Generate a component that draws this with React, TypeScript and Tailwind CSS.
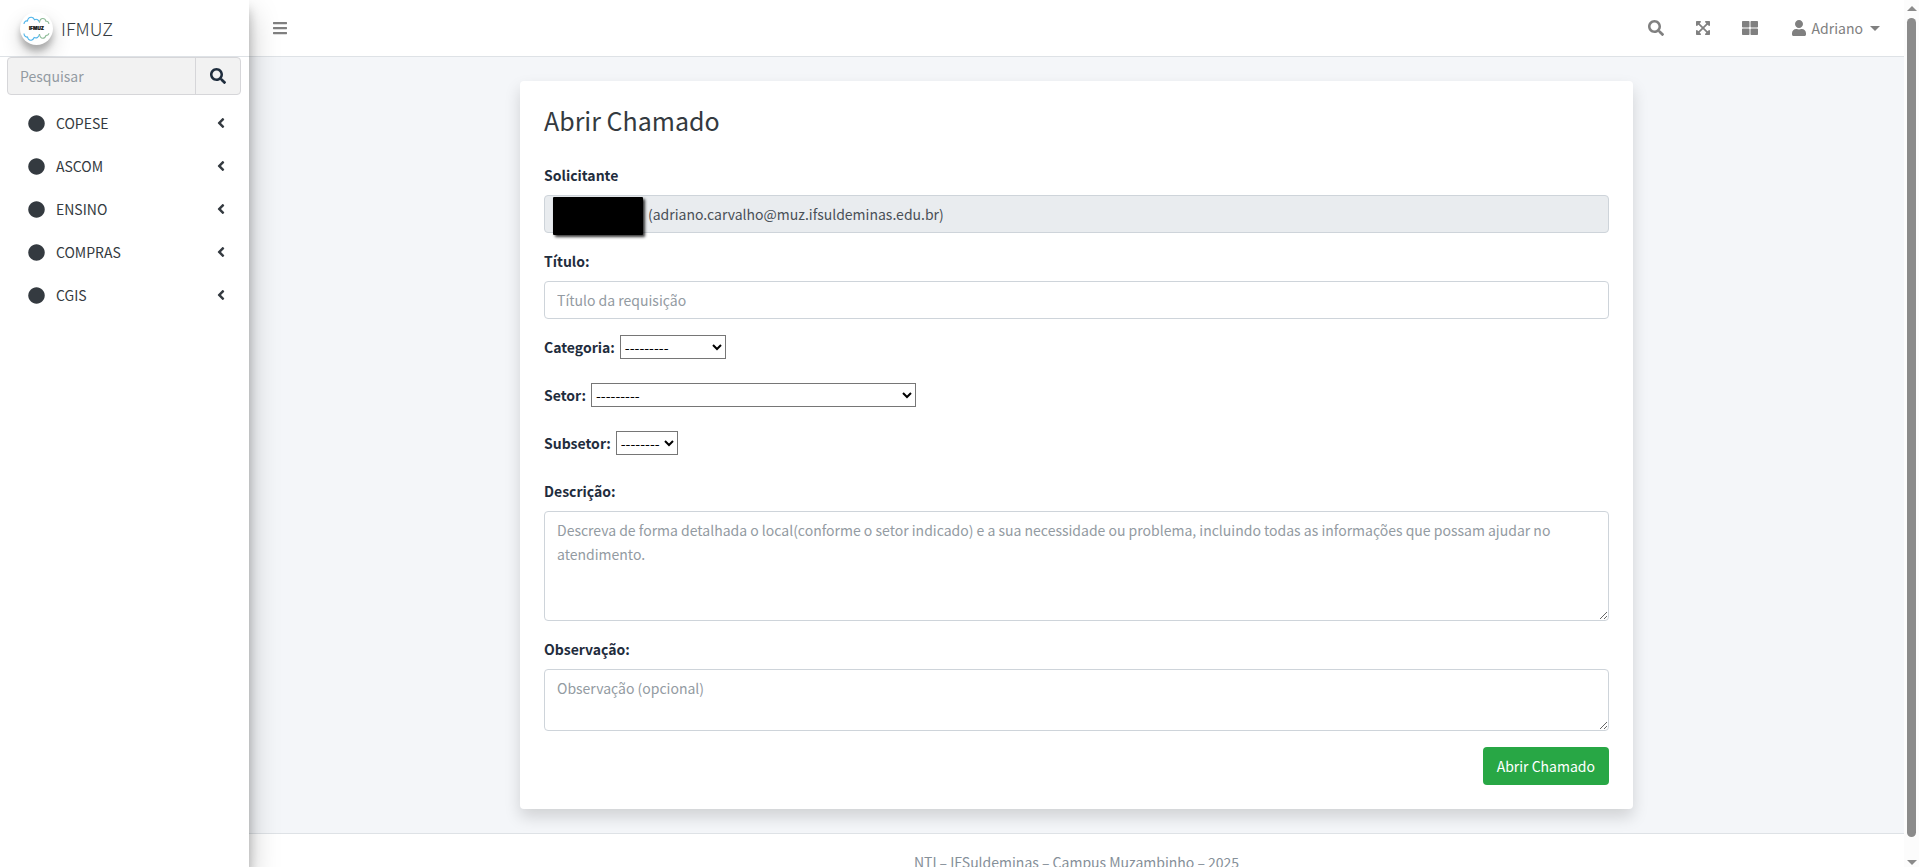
import React from "react";
import {
  FaAngleLeft,
  FaBars,
  FaCircle,
  FaExpandArrowsAlt,
  FaSearch,
  FaThLarge,
  FaUser,
} from "react-icons/fa";

const sections = ["COPESE", "ASCOM", "ENSINO", "COMPRAS", "CGIS"];

const field =
  "block w-full rounded border border-[#ced4da] bg-white px-3 py-1.5 text-[#495057] placeholder:text-[#939ba2] outline-none";
const label = "font-bold text-[#1f2d3d]";

function Logo() {
  return (
    <span className="flex size-[33px] items-center justify-center rounded-full bg-white shadow-[0_10px_20px_rgba(0,0,0,0.19),0_6px_6px_rgba(0,0,0,0.23)]">
      <svg viewBox="0 0 33 33" className="size-[33px]" fill="none" strokeWidth="1.1" aria-hidden="true">
        <path
          stroke="#4db4ea"
          d="M4 12c0-2 1.500-3.500 3.500-3 .2-2.500 1.800-4 4-3.800 1.700.2 2.500 1.300 3 2.500 2.200-1.200 4.500.2 5 2.800M4 21.500c0 2 1.500 4 3.500 3.500.5 2.500 2 3.500 3.800 3.200 1.700-.3 2.400-1.400 2.900-2.700 2.200 1 4.800 0 5.300-3.500"
        />
        <path
          stroke="#8dbb97"
          d="M19.500 10.500c.3-2.500 1.500-4 3.300-4 1.700 0 2.700 1 3.200 2.800 1.800-.3 2.700.9 2.900 2.700M19.500 22c.3 2.600 1.500 4.200 3.300 4.200 1.700 0 2.700-1.100 3.200-2.700 1.700-.2 2.700-.8 2.900-2.300"
        />
        <text
          x="16.500"
          y="18"
          textAnchor="middle"
          fontFamily="Inter, sans-serif"
          fontSize="4.600"
          fontWeight="900"
          stroke="#111"
          strokeWidth="0.2"
          fill="#111"
        >
          IFMUZ
        </text>
      </svg>
    </span>
  );
}

function Sidebar() {
  return (
    <aside className="z-20 flex w-[249px] shrink-0 flex-col bg-white shadow-[0_14px_28px_rgba(0,0,0,0.25),0_10px_10px_rgba(0,0,0,0.22)]">
      <a href="#" className="flex h-[57px] shrink-0 items-center gap-2 border-b border-[#dee2e6] pl-5 text-[#343a40]">
        <Logo />
        <span className="font-['Noto_Sans_CJK_SC_Light','Noto_Sans_CJK_JP_Light','Noto_Sans_CJK_SC',sans-serif] text-lg leading-6 font-light">
          IFMUZ
        </span>
      </a>
      <form className="mr-2 ml-[7px] flex h-[38px] shrink-0 overflow-hidden rounded border border-[#d6d6d9] bg-[#f2f2f2]" onSubmit={(e) => e.preventDefault()}>
        <input
          type="search"
          aria-label="Pesquisar"
          placeholder="Pesquisar"
          className="min-w-0 flex-1 px-3 outline-none placeholder:text-[#939ba2]"
        />
        <button type="submit" aria-label="Buscar" className="flex w-[45px] items-center justify-center border-l border-[#d6d6d9] text-base text-[#1f2d3d]">
          <FaSearch />
        </button>
      </form>
      <nav className="mt-2 flex flex-col gap-[3px] px-2">
        {sections.map((name) => (
          <a key={name} href="#" className="flex h-10 items-center gap-[11px] pr-3 pl-5 text-[#343a40]">
            <FaCircle className="size-[17px]" />
            <span className="flex-1">{name}</span>
            <FaAngleLeft className="size-4" />
          </a>
        ))}
      </nav>
    </aside>
  );
}

function Header() {
  return (
    <header className="flex h-[57px] shrink-0 items-center border-b border-[#dee2e6] bg-white pr-6 pl-[23px] text-[#808080]">
      <button type="button" aria-label="Menu" className="text-base">
        <FaBars />
      </button>
      <div className="ml-auto flex items-center gap-[31px] text-base">
        <button type="button" aria-label="Pesquisar">
          <FaSearch />
        </button>
        <button type="button" aria-label="Tela cheia">
          <FaExpandArrowsAlt />
        </button>
        <button type="button" aria-label="Painéis">
          <FaThLarge />
        </button>
        <button type="button" className="flex items-center">
          <FaUser className="mr-[5px] ml-0.5" />
          <span className="text-sm leading-6">Adriano</span>
          <span className="ml-[7px] border-x-[5px] border-t-[5px] border-x-transparent border-t-[#808080]" />
        </button>
      </div>
    </header>
  );
}

function SelectRow({ id, text, width, dashes }: { id: string; text: string; width: string; dashes: string }) {
  return (
    <div className="mb-6 flex h-6 items-center gap-[5px]">
      <label htmlFor={id} className={label}>
        {text}
      </label>
      <select id={id} className={`h-6 border border-[#767676] bg-white text-black ${width}`}>
        <option>{dashes}</option>
      </select>
    </div>
  );
}

function TicketForm() {
  return (
    <form className="mx-auto w-full max-w-[1113px] rounded bg-white p-6 shadow-[0_8px_16px_rgba(0,0,0,0.15)]" onSubmit={(e) => e.preventDefault()}>
      <h1 className="mb-7 text-[25px] leading-[30px] text-[#343a40]">Abrir Chamado</h1>

      <div className="mb-4">
        <label htmlFor="solicitante" className={`mb-2 block ${label}`}>
          Solicitante
        </label>
        <div className="relative">
          <input
            id="solicitante"
            readOnly
            value="(adriano.carvalho@muz.ifsuldeminas.edu.br)"
            className="block h-[38px] w-full rounded border border-[#ced4da] bg-[#e9ecef] pr-3 pl-[103px] text-[#495057] outline-none"
          />
          <span className="absolute top-0.5 left-[9px] h-[38px] w-[90px] rounded-[1px] bg-black shadow-[2px_2px_3px_rgba(0,0,0,0.8)]" />
        </div>
      </div>

      <div className="mb-4">
        <label htmlFor="titulo" className={`mb-2 block ${label}`}>
          Título:
        </label>
        <input id="titulo" placeholder="Título da requisição" className={`h-[38px] ${field}`} />
      </div>

      <SelectRow id="categoria" text="Categoria:" width="w-[106px]" dashes="---------" />
      <SelectRow id="setor" text="Setor:" width="w-[325px]" dashes="---------" />
      <SelectRow id="subsetor" text="Subsetor:" width="w-[62px]" dashes="--------" />

      <div className="mb-4">
        <label htmlFor="descricao" className={`mb-2 block ${label}`}>
          Descrição:
        </label>
        <textarea
          id="descricao"
          rows={4}
          placeholder="Descreva de forma detalhada o local(conforme o setor indicado) e a sua necessidade ou problema, incluindo todas as informações que possam ajudar no atendimento."
          className={field}
        />
      </div>

      <div className="mb-4">
        <label htmlFor="observacao" className={`mb-2 block ${label}`}>
          Observação:
        </label>
        <textarea id="observacao" rows={2} placeholder="Observação (opcional)" className={field} />
      </div>

      <div className="flex justify-end">
        <button type="submit" className="h-[38px] rounded bg-[#28a745] px-3.5 text-white">
          Abrir Chamado
        </button>
      </div>
    </form>
  );
}

function ScrollRail() {
  return (
    <div className="flex w-[15px] shrink-0 flex-col items-center bg-[#fcfcfc] py-1.5" aria-hidden="true">
      <span className="border-x-[5px] border-b-[5px] border-x-transparent border-b-[#8b8b8b]" />
      <span className="mt-[7px] mb-[23px] w-[9px] flex-1 rounded-full bg-[#8b8b8b]" />
      <span className="mb-[-4px] border-x-[5px] border-t-[5px] border-x-transparent border-t-[#8b8b8b]" />
    </div>
  );
}

export default function App() {
  return (
    <div className="flex h-screen overflow-hidden bg-[#f4f6f9] font-['Source_Sans_Pro','Noto_Sans_CJK_SC',sans-serif] text-sm leading-6">
      <Sidebar />
      <div className="flex min-w-0 flex-1 flex-col">
        <Header />
        <main className="shrink-0 px-6 py-6">
          <TicketForm />
        </main>
        <footer className="shrink-0 border-t border-[#dee2e6] bg-white p-4 text-center text-[#869099]">
          NTI – IFSuldeminas – Campus Muzambinho – 2025
        </footer>
      </div>
      <ScrollRail />
    </div>
  );
}
